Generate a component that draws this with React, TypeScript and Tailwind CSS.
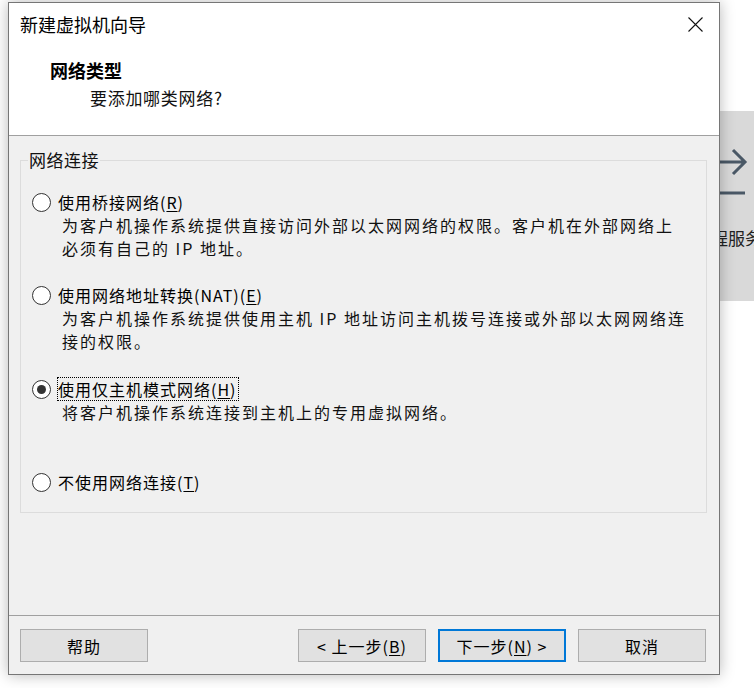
import React, { useState } from 'react';

const FONT = { fontFamily: '"Noto Sans CJK SC", "Microsoft YaHei", sans-serif' };

interface NetOption {
  id: string;
  label: string;
  key: string;
  desc: string[];
  gap: string;
}

const options: NetOption[] = [
  { id: 'bridge', label: '使用桥接网络(', key: 'R', desc: ['为客户机操作系统提供直接访问外部以太网网络的权限。客户机在外部网络上', '必须有自己的 IP 地址。'], gap: 'mt-[18px]' },
  { id: 'nat', label: '使用网络地址转换(NAT)(', key: 'E', desc: ['为客户机操作系统提供使用主机 IP 地址访问主机拨号连接或外部以太网网络连', '接的权限。'], gap: 'mt-[23px]' },
  { id: 'host', label: '使用仅主机模式网络(', key: 'H', desc: ['将客户机操作系统连接到主机上的专用虚拟网络。'], gap: 'mt-[24px]' },
  { id: 'none', label: '不使用网络连接(', key: 'T', desc: [], gap: 'mt-[46px]' },
];

function Radio({ checked }: { checked: boolean }) {
  return (
    <div className="w-[19px] h-[19px] rounded-full border border-[#333333] bg-white flex items-center justify-center shrink-0">
      {checked && <div className="w-[9px] h-[9px] rounded-full bg-[#333333]" />}
    </div>
  );
}

function Button({ children, primary }: { children: React.ReactNode; primary?: boolean }) {
  return (
    <button
      className={
        'w-[128px] h-[33px] bg-[#e1e1e1] text-[16px] tracking-[1px] text-black flex items-center justify-center ' +
        (primary ? 'border-2 border-[#0078d7]' : 'border border-[#adadad]')
      }
    >
      {children}
    </button>
  );
}

export default function App() {
  const [selected, setSelected] = useState('host');

  return (
    <div className="relative w-[754px] h-[688px] bg-white overflow-hidden" style={FONT}>
      {/* app window behind the dialog */}
      <div className="absolute left-[700px] top-[111px] w-[54px] h-[190px] bg-[#d9d9d9] overflow-hidden">
        <svg className="absolute left-[18px] top-[34px]" width="30" height="50" viewBox="0 0 30 50" fill="none" stroke="#4a5866" strokeWidth="3">
          <path d="M0 17h26M15 5l12 12-12 12" />
          <path d="M0 48h27" />
        </svg>
        <div className="absolute left-[11px] top-[114px] w-[43px] overflow-hidden text-[17px] text-[#222] whitespace-nowrap">程服务</div>
      </div>

      {/* dialog */}
      <div className="absolute left-[8px] top-[2px] w-[712px] h-[673px] border border-[#767676] bg-[#f0f0f0] flex flex-col shadow-[0_0_14px_rgba(0,0,0,0.28)]">
        <div className="h-[133px] bg-white border-b border-[#a0a0a0] flex flex-col relative shrink-0">
          <div className="pl-[11px] pt-[9px] h-[33px] text-[18px] leading-[24px] text-black">新建虚拟机向导</div>
          <svg className="absolute right-[16px] top-[14px]" width="15" height="15" viewBox="0 0 15 15" stroke="#111" strokeWidth="1.1">
            <path d="M0.5 0.5l14 14M14.5 0.5l-14 14" />
          </svg>
          <div className="mt-[22px] pl-[41px] text-[18px] leading-[24px] font-bold text-black">网络类型</div>
          <div className="mt-[4px] pl-[81px] text-[17px] tracking-[0.7px] leading-[24px] text-[#111]">要添加哪类网络?</div>
        </div>

        <div className="flex-1 flex flex-col">
          <fieldset className="mt-[12px] ml-[11px] w-[687px] border border-[#dcdcdc] pb-[18px]">
            <legend className="ml-[7px] px-[1px] text-[17px] tracking-[0.5px] leading-[24px] text-[#111]">网络连接</legend>
            {options.map((o) => (
              <div key={o.id} className={o.gap + ' pl-[11px] flex flex-col'} onClick={() => setSelected(o.id)}>
                <div className="flex items-center h-[24px]">
                  <Radio checked={selected === o.id} />
                  <span
                    className={
                      'ml-[6px] pr-[1px] text-[16px] tracking-[1px] leading-[22px] text-black border border-dotted ' +
                      (selected === o.id ? 'border-black' : 'border-transparent')
                    }
                  >
                    {o.label}
                    <span className="underline underline-offset-2">{o.key}</span>)
                  </span>
                </div>
                {o.desc.map((d) => (
                  <div key={d} className="pl-[30px] text-[16px] tracking-[2px] leading-[23px] text-[#111] whitespace-nowrap">
                    {d}
                  </div>
                ))}
              </div>
            ))}
          </fieldset>
        </div>

        <div className="h-[59px] border-t border-[#a0a0a0] pt-[13px] pl-[11px] pr-[13px] flex items-start shrink-0">
          <Button>帮助</Button>
          <div className="flex-1" />
          <div className="flex gap-[12px]">
            <Button>
              &lt; 上一步(<span className="underline underline-offset-2">B</span>)
            </Button>
            <Button primary>
              下一步(<span className="underline underline-offset-2">N</span>) &gt;
            </Button>
            <Button>取消</Button>
          </div>
        </div>
      </div>
    </div>
  );
}
